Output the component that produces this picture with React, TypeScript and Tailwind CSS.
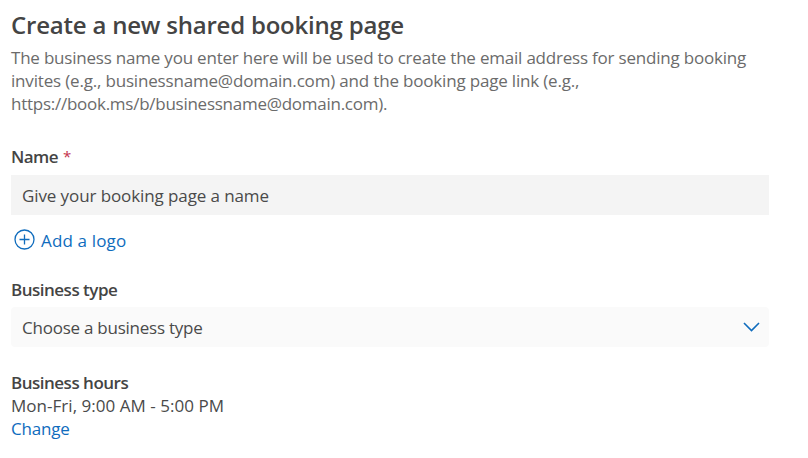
import React from 'react';

const App = () => {
  return (
    <div className="h-[458px] w-[808px] overflow-hidden whitespace-nowrap bg-white pl-[11px] pr-[39px] pt-[9px] font-['Open_Sans','Noto_Sans',sans-serif] text-[17px] leading-[23px] tracking-[-0.21px] text-[#4a4a4a]">
      <h1 className="text-[24px] font-semibold leading-8 tracking-[-0.21px] text-[#444444]">
        Create a new shared booking page
      </h1>
      <p className="mt-[5px] text-[#6b6b6b]">
        The business name you enter here will be used to create the email address for sending booking
        <br />
        <span className="tracking-[-0.18px]">invites (e.g., businessname@domain.com) and the booking page link (e.g.,</span>
        <br />
        <span className="tracking-[-0.26px]">https://book.ms/b/businessname@domain.com).</span>
      </p>

      {/* Name */}
      <div className="mt-[30px] flex gap-[5px] text-[#444444]">
        <span className="font-semibold tracking-[-0.55px]">Name</span>
        <span className="text-[15px] text-[#c4314b]">*</span>
      </div>
      <div className="mt-[7px] flex h-10 items-center bg-[#f4f4f4] pl-[11px] tracking-[-0.1px]">
        Give your booking page a name
      </div>

      <button className="mt-[14px] flex h-[23px] items-center gap-[5px] pl-[3px] tracking-[0.15px] text-[#0f6cbd]">
        <svg className="mb-0.5" width="22" height="22" viewBox="0 0 22 22" fill="none" stroke="currentColor" strokeWidth="1.3">
          <circle cx="10.5" cy="10.5" r="9.5" />
          <path d="M10.5 5.5v10M5.5 10.5h10" />
        </svg>
        <span>Add a logo</span>
      </button>

      {/* Business type */}
      <div className="mt-[26px] font-semibold tracking-[-0.5px] text-[#444444]">Business type</div>
      <div className="mt-[6px] flex h-10 items-center justify-between rounded bg-[#fafafa] pl-[11px] pr-[9px]">
        <span className="tracking-[-0.24px]">Choose a business type</span>
        <svg width="17" height="10" viewBox="0 0 17 10" fill="none" stroke="#0f6cbd" strokeWidth="1.6">
          <path d="M1 1l7.5 7.5L16 1" />
        </svg>
      </div>

      {/* Business hours */}
      <div className="mt-[24px] font-semibold tracking-[-0.5px] text-[#444444]">Business hours</div>
      <div className="tracking-[0.03px]">Mon-Fri, 9:00 AM - 5:00 PM</div>
      <button className="block text-[#0f6cbd]">Change</button>
    </div>
  );
};

export default App;
